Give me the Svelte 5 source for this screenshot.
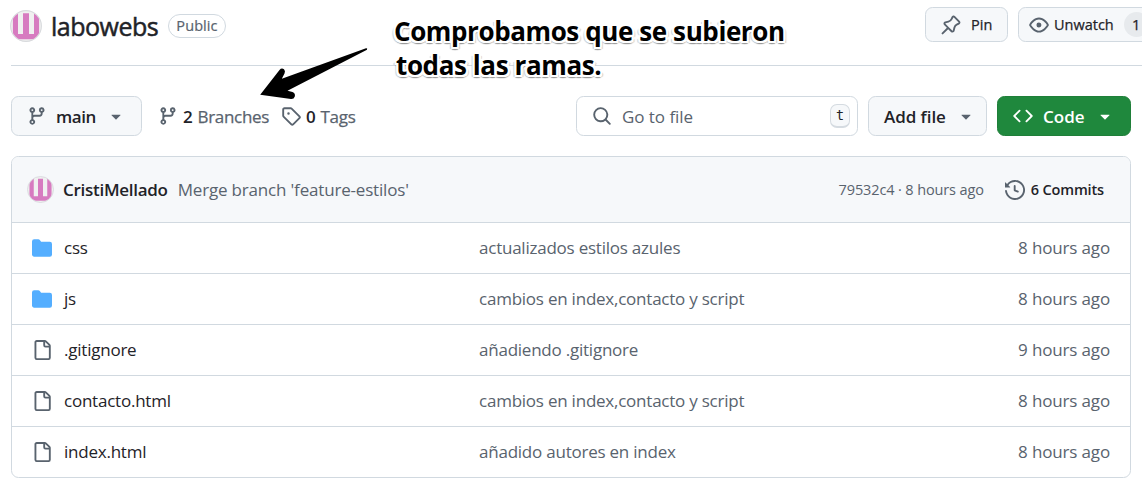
<script>
  const icons = {
    branch: 'M9.5 3.25a2.25 2.25 0 1 1 3 2.122V6A2.5 2.5 0 0 1 10 8.5H6a1 1 0 0 0-1 1v1.128a2.251 2.251 0 1 1-1.5 0V5.372a2.25 2.25 0 1 1 1.5 0v1.836A2.493 2.493 0 0 1 6 7h4a1 1 0 0 0 1-1v-.628A2.25 2.25 0 0 1 9.5 3.25Zm-6 0a.75.75 0 1 0 1.5 0 .75.75 0 0 0-1.5 0Zm8.25-.75a.75.75 0 1 0 0 1.5.75.75 0 0 0 0-1.5ZM4.25 12a.75.75 0 1 0 0 1.5.75.75 0 0 0 0-1.5Z',
    tag: 'M1 7.775V2.75C1 1.784 1.784 1 2.75 1h5.025c.464 0 .91.184 1.238.513l6.25 6.25a1.75 1.75 0 0 1 0 2.474l-5.026 5.026a1.75 1.75 0 0 1-2.474 0l-6.25-6.25A1.752 1.752 0 0 1 1 7.775Zm1.5 0c0 .066.026.13.073.177l6.25 6.25a.25.25 0 0 0 .354 0l5.025-5.025a.25.25 0 0 0 0-.354l-6.25-6.25a.25.25 0 0 0-.177-.073H2.75a.25.25 0 0 0-.25.25ZM6 5a1 1 0 1 1 0 2 1 1 0 0 1 0-2Z',
    magnifier: 'M10.68 11.74a6 6 0 0 1-7.922-8.982 6 6 0 0 1 8.982 7.922l3.04 3.04a.749.749 0 0 1-.326 1.275.749.749 0 0 1-.734-.215ZM11.5 7a4.499 4.499 0 1 0-8.997 0A4.499 4.499 0 0 0 11.5 7Z',
    caret: 'm4.427 7.427 3.396 3.396a.25.25 0 0 0 .354 0l3.396-3.396A.25.25 0 0 0 11.396 7H4.604a.25.25 0 0 0-.177.427Z',
    code: 'm11.28 3.22 4.25 4.25a.75.75 0 0 1 0 1.06l-4.25 4.25a.749.749 0 0 1-1.275-.326.749.749 0 0 1 .215-.734L13.94 8l-3.72-3.72a.749.749 0 0 1 .326-1.275.749.749 0 0 1 .734.215Zm-6.56 0a.751.751 0 0 1 1.042.018.751.751 0 0 1 .018 1.042L2.06 8l3.72 3.72a.749.749 0 0 1-.326 1.275.749.749 0 0 1-.734-.215L.47 8.53a.75.75 0 0 1 0-1.06Z',
    history: 'm.427 1.927 1.215 1.215a8.002 8.002 0 1 1-1.6 5.685.75.75 0 1 1 1.493-.154 6.5 6.5 0 1 0 1.18-4.458l1.358 1.358A.25.25 0 0 1 3.896 6H.25A.25.25 0 0 1 0 5.75V2.104a.25.25 0 0 1 .427-.177ZM7.75 4a.75.75 0 0 1 .75.75v2.992l2.028.812a.75.75 0 0 1-.557 1.392l-2.5-1A.751.751 0 0 1 7 8.25v-3.5A.75.75 0 0 1 7.75 4Z',
    file: 'M2 1.75C2 .784 2.784 0 3.75 0h6.586c.464 0 .909.184 1.237.513l2.914 2.914c.329.328.513.773.513 1.237v9.586A1.75 1.75 0 0 1 13.25 16h-9.5A1.75 1.75 0 0 1 2 14.25Zm1.75-.25a.25.25 0 0 0-.25.25v12.5c0 .138.112.25.25.25h9.5a.25.25 0 0 0 .25-.25V6h-2.75A1.75 1.75 0 0 1 9 4.25V1.5Zm6.75.062V4.25c0 .138.112.25.25.25h2.688l-.011-.013-2.914-2.914-.013-.011Z',
    folder: 'M1.75 1A1.75 1.75 0 0 0 0 2.75v10.5C0 14.216.784 15 1.75 15h12.5A1.75 1.75 0 0 0 16 13.25v-8.5A1.75 1.75 0 0 0 14.25 3H7.5a.25.25 0 0 1-.2-.1l-.9-1.2C6.07 1.26 5.55 1 5 1H1.75Z',
    eye: 'M8 2c1.981 0 3.671.992 4.933 2.078 1.27 1.091 2.187 2.345 2.637 3.023a1.62 1.62 0 0 1 0 1.798c-.45.678-1.367 1.932-2.637 3.023C11.67 13.008 9.981 14 8 14c-1.981 0-3.671-.992-4.933-2.078C1.797 10.83.88 9.576.43 8.898a1.62 1.62 0 0 1 0-1.798c.45-.677 1.367-1.931 2.637-3.022C4.33 2.992 6.019 2 8 2ZM1.679 7.932a.12.12 0 0 0 0 .136c.411.622 1.241 1.75 2.366 2.717C5.176 11.758 6.527 12.5 8 12.5c1.473 0 2.825-.742 3.955-1.715 1.124-.967 1.954-2.096 2.366-2.717a.12.12 0 0 0 0-.136c-.412-.621-1.242-1.75-2.366-2.717C10.824 4.242 9.473 3.5 8 3.5c-1.473 0-2.825.742-3.955 1.715-1.124.967-1.954 2.096-2.366 2.717ZM8 10a2 2 0 1 1-.001-3.999A2 2 0 0 1 8 10Z',
    pin: 'm11.294.984 3.722 3.722a1.75 1.75 0 0 1-.504 2.826l-1.327.613a3.089 3.089 0 0 0-1.707 2.084l-.584 2.454c-.317 1.332-1.972 1.8-2.94.832L5.75 11.311 1.78 15.28a.749.749 0 1 1-1.06-1.06l3.969-3.97-2.204-2.204c-.968-.968-.5-2.623.832-2.94l2.454-.584a3.08 3.08 0 0 0 2.084-1.707l.613-1.327a1.75 1.75 0 0 1 2.826-.504ZM6.283 9.723l2.732 2.731a.25.25 0 0 0 .42-.119l.584-2.454a4.586 4.586 0 0 1 2.537-3.098l1.328-.613a.25.25 0 0 0 .072-.404l-3.722-3.722a.25.25 0 0 0-.404.072l-.613 1.328a4.584 4.584 0 0 1-3.098 2.537l-2.454.584a.25.25 0 0 0-.119.42l2.731 2.732Z'
  };

  const files = [
    { icon: 'folder', name: 'css', message: 'actualizados estilos azules', age: '8 hours ago' },
    { icon: 'folder', name: 'js', message: 'cambios en index,contacto y script', age: '8 hours ago' },
    { icon: 'file', name: '.gitignore', message: 'añadiendo .gitignore', age: '9 hours ago' },
    { icon: 'file', name: 'contacto.html', message: 'cambios en index,contacto y script', age: '8 hours ago' },
    { icon: 'file', name: 'index.html', message: 'añadido autores en index', age: '8 hours ago' }
  ];
</script>

{#snippet icon(name)}
  <svg class="icon {name}" viewBox="0 0 16 16" width="20" height="20"><path d={icons[name]} /></svg>
{/snippet}

{#snippet avatar(size)}
  <svg class="avatar" viewBox="0 0 32 32" width={size} height={size}>
    <defs><clipPath id="disc{size}"><circle cx="16" cy="16" r="14.8" /></clipPath></defs>
    <circle cx="16" cy="16" r="15.4" fill="#f0f0f0" stroke="#d8dadd" stroke-width="1.1" />
    <path clip-path="url(#disc{size})" fill="#d77bc0" d="M2.9 3.2H8V24h5V3.200h6V24h5V3.200h5.100V29.200H2.900z" />
  </svg>
{/snippet}

<main>
  <header>
    {@render avatar(32)}
    <h1>labowebs</h1>
    <span class="badge">Public</span>
    <div class="actions">
      <button class="small pinbtn">{@render icon('pin')}<span>Pin</span></button>
      <button class="small watch">{@render icon('eye')}<span>Unwatch</span><span class="count">1</span></button>
    </div>
  </header>

  <nav>
    <button class="mainbtn">{@render icon('branch')}<span>main</span>{@render icon('caret')}</button>
    <a class="branches" href="#branches">{@render icon('branch')}<b>2</b><span>Branches</span></a>
    <a class="tags" href="#tags">{@render icon('tag')}<b>0</b><span>Tags</span></a>
    <label class="search">{@render icon('magnifier')}<span>Go to file</span><kbd>t</kbd></label>
    <button class="add"><span>Add file</span>{@render icon('caret')}</button>
    <button class="green">{@render icon('code')}<span>Code</span>{@render icon('caret')}</button>
  </nav>

  <section>
    <div class="commit">
      {@render avatar(27)}
      <strong>CristiMellado</strong>
      <span class="msg">Merge branch 'feature-estilos'</span>
      <span class="sha">79532c4 · 8 hours ago</span>
      {@render icon('history')}
      <b>6 Commits</b>
    </div>
    {#each files as f}
      <div class="row">
        {@render icon(f.icon)}
        <span class="name">{f.name}</span>
        <span class="msg">{f.message}</span>
        <span class="age">{f.age}</span>
      </div>
    {/each}
  </section>

  <svg class="arrow" viewBox="0 0 112 56" width="112" height="56">
    <path d="M106 0.300 Q107.800 0.200 107 1.700 L27.500 42.700 L32.500 44 Q35.600 45 34.800 48.500 Q34 51.200 31 51 L0.200 46.800 L19.500 22 Q21.500 19.500 24 21.200 Q25.700 23 24.500 25.500 L21.800 30.800 Z" />
  </svg>
  <p class="note"><span>Comprobamos que se subieron</span><span>todas las ramas.</span></p>
</main>

<style>
  :global(body) { background: #fff; overflow: hidden; }
  main {
    position: relative;
    box-sizing: border-box;
    width: 1142px;
    height: 496px;
    padding-left: 11px;
    overflow: hidden;
    font: 17px/26px "Open Sans", "Noto Sans", sans-serif;
    letter-spacing: -0.23px;
    color: #1f2328;
    white-space: nowrap;
  }
  .icon { flex: none; fill: #59636e; }
  .avatar { flex: none; display: block; }
  b, strong { font-weight: 600; }

  header {
    display: flex;
    align-items: center;
    box-sizing: border-box;
    height: 66px;
    padding-bottom: 14px;
    border-bottom: 1px solid #d1d9e0;
  }
  header .avatar { margin-left: -1px; }
  h1 {
    flex: none;
    margin: 1px 0 0 9px;
    width: 110px;
    font-size: 25px;
    font-weight: 400;
    letter-spacing: -0.5px;
    -webkit-text-stroke: 0.5px #1f2328;
  }
  .badge {
    box-sizing: border-box;
    width: 58px;
    height: 24px;
    margin: 1px 0 0 7px;
    border: 1px solid #d1d9e0;
    border-radius: 12px;
    font-size: 14.5px;
    line-height: 22px;
    text-align: center;
    color: #59636e;
    letter-spacing: 0.1px;
    -webkit-text-stroke: 0.2px #59636e;
  }
  .actions { display: flex; gap: 10px; margin: -2px -40px 0 auto; }

  button {
    display: flex;
    align-items: center;
    flex: none;
    box-sizing: border-box;
    height: 40px;
    padding: 0;
    border: 1px solid #d1d9e0;
    border-radius: 7.5px;
    background: #f6f8fa;
    color: #1f2328;
    font: 600 17px/26px "Open Sans", "Noto Sans", sans-serif;
    letter-spacing: -0.2px;
  }
  .small {
    height: 35px;
    font-size: 14.5px;
    font-weight: 400;
    letter-spacing: 0;
    -webkit-text-stroke: 0.25px #1f2328;
  }
  .pinbtn { width: 83px; padding-left: 15px; gap: 10px; }
  .watch { width: 164px; padding-left: 10px; gap: 5px; }
  .count {
    width: 25px;
    height: 25px;
    margin-left: 5px;
    border-radius: 13px;
    background: #e7eaed;
    line-height: 25px;
    text-align: center;
  }

  nav { display: flex; align-items: center; height: 40px; margin: 30px 11px 20px 0; }
  nav span, nav b { position: relative; top: 0.5px; }
  .mainbtn { width: 131px; padding-left: 15px; }
  .mainbtn span { width: 50px; margin-left: 9px; text-align: left; letter-spacing: -0.45px; }
  nav a { display: flex; align-items: center; color: #59636e; text-decoration: none; }
  nav a b { color: #1f2328; margin: 0 5px; }
  nav a span { -webkit-text-stroke: 0.25px #59636e; letter-spacing: -0.3px; }
  .branches { width: 123px; margin-left: 16px; }
  .search {
    display: flex;
    align-items: center;
    box-sizing: border-box;
    width: 282px;
    height: 40px;
    margin-left: auto;
    padding: 0 7px 0 15px;
    border: 1px solid #d1d9e0;
    border-radius: 7.5px;
    color: #59636e;
  }
  .search span { margin-left: 10px; letter-spacing: -0.05px; }
  kbd {
    box-sizing: border-box;
    width: 20px;
    height: 24px;
    margin-left: auto;
    border: 1px solid #d5dbe1;
    border-bottom-width: 2px;
    border-radius: 7px;
    background: #f6f8fa;
    color: #1f2328;
    font: 13.5px/21px "DejaVu Sans Mono", monospace;
    text-align: center;
  }
  .add { width: 119px; margin-left: 10px; padding: 0 10px 0 15px; justify-content: space-between; letter-spacing: -0.05px; }
  .green {
    width: 134px;
    margin-left: 10px;
    padding-left: 15px;
    border-color: #1f7f39;
    background: #1f883d;
    color: #fff;
    letter-spacing: 0;
  }
  .green .icon { fill: #fff; }
  .green span { width: 52px; margin-left: 10px; text-align: left; }

  section {
    box-sizing: border-box;
    width: 1120px;
    border: 1px solid #d1d9e0;
    border-radius: 7.5px;
    overflow: hidden;
  }
  .commit { display: flex; align-items: center; height: 65px; padding: 0 26px 0 15px; background: #f6f8fa; }
  .commit strong { margin-left: 9px; letter-spacing: -0.28px; }
  .commit .msg { margin-left: 10px; letter-spacing: -0.18px; color: #59636e; }
  .commit .sha { margin-left: auto; font-size: 14.5px; letter-spacing: -0.13px; color: #59636e; }
  .commit .history { margin-left: 21px; }
  .commit b { margin-left: 6px; font-size: 14.5px; letter-spacing: -0.15px; }
  .row {
    display: grid;
    grid-template-columns: 20px 415px 1fr auto;
    align-items: center;
    height: 50px;
    padding: 0 20px;
    border-top: 1px solid #d1d9e0;
  }
  .row .name { padding-left: 12px; }
  .row .msg { padding-left: 12px; color: #59636e; }
  .row .age { color: #59636e; letter-spacing: -0.15px; }
  .folder { fill: #54aeff; }

  .arrow { position: absolute; left: 260px; top: 48px; }
  .note {
    position: absolute;
    left: 394px;
    top: 14px;
    margin: 0;
    color: #000;
    font-size: 26px;
    font-weight: 700;
    line-height: 34px;
    letter-spacing: -0.4px;
    text-shadow: 2px 0 #fff, -2px 0 #fff, 0 2px #fff, 0 -2px #fff, 2px 2px #fff, -2px 2px #fff,
      2px -2px #fff, -2px -2px #fff, 1px 3px 1px #999, -1px 3px 1px #999, 3px 2px 1px #ccc, -3px 2px 1px #ccc;
  }
  .note span { display: block; }
  .note span + span { margin-left: 2px; }
</style>
